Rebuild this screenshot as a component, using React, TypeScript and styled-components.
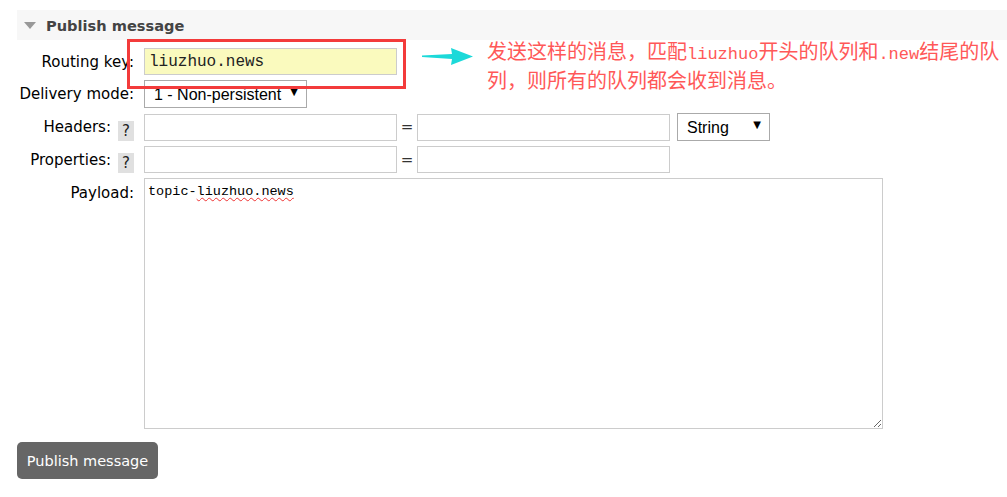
import * as React from 'react';
import styled, { createGlobalStyle } from 'styled-components';

const GlobalStyle = createGlobalStyle`
  html, body {
    margin: 0;
    padding: 0;
    background: #fff;
  }
  body {
    font-family: "DejaVu Sans", Verdana, sans-serif;
    font-size: 15px;
    color: #000;
  }
`;

const Page = styled.div`
  position: relative;
  width: 1007px;
  height: 497px;
  padding: 10px 0 0 17px;
  box-sizing: border-box;
  overflow: hidden;
`;

const SectionHeader = styled.div`
  display: flex;
  align-items: center;
  height: 30px;
  padding-left: 7px;
  background: #f7f7f7;
`;

const Triangle = styled.span`
  width: 0;
  height: 0;
  border-left: 6.5px solid transparent;
  border-right: 6.5px solid transparent;
  border-top: 7px solid #999;
  margin-right: 10px;
`;

const Title = styled.h2`
  margin: 0;
  font-size: 14.6px;
  font-weight: bold;
  color: #444;
`;

const Form = styled.div`
  display: grid;
  grid-template-columns: 117px auto;
  column-gap: 10px;
  row-gap: 5px;
  margin-top: 8px;
`;

const Label = styled.label<{ $top?: boolean }>`
  display: flex;
  align-items: ${ p => p.$top ? 'flex-start' : 'center' };
  justify-content: flex-end;
  white-space: nowrap;
  padding-top: ${ p => p.$top ? '6px' : '0' };
`;

const Help = styled.span`
  display: inline-flex;
  align-items: center;
  justify-content: center;
  align-self: flex-end;
  width: 16px;
  height: 20px;
  margin-left: 7px;
  background: #e0e0e0;
  color: #222;
  font-size: 15px;
`;

const Controls = styled.div`
  display: flex;
  align-items: center;
`;

const TextInput = styled.input<{ $highlight?: boolean }>`
  box-sizing: border-box;
  width: 253px;
  height: 27px;
  margin: 0;
  padding: 0 4px;
  border: 1px solid #ccc;
  background: ${ p => p.$highlight ? '#fafabe' : '#fff' };
  font-family: "Liberation Mono", "Courier New", monospace;
  font-size: 16px;
  color: #222;
  outline: none;
`;

const Equals = styled.span`
  width: 20px;
  text-align: center;
  color: #333;
`;

const SelectWrap = styled.div<{ $width: number }>`
  position: relative;
  width: ${ p => p.$width }px;
  margin-left: ${ p => p.$width < 120 ? '7px' : '0' };
`;

const Select = styled.select`
  appearance: none;
  box-sizing: border-box;
  width: 100%;
  height: 28px;
  margin: 0;
  padding: 0 0 0 9px;
  border: 1px solid #aaa;
  border-radius: 0;
  background: #fff;
  font-family: "Liberation Sans", Arial, sans-serif;
  font-size: 16px;
  color: #000;
`;

const Caret = styled.span`
  position: absolute;
  right: 9px;
  top: 6px;
  font-size: 10px;
  color: #000;
  pointer-events: none;
`;

const Payload = styled.div`
  box-sizing: border-box;
  width: 739px;
  height: 251px;
  padding: 5px 3px;
  border: 1px solid #ccc;
  font-family: "Liberation Mono", "Courier New", monospace;
  font-size: 13.5px;
  color: #000;
  overflow: auto;
  resize: both;
`;

const Misspelled = styled.span`
  text-decoration: underline wavy #e33;
  text-decoration-thickness: 1px;
  text-underline-offset: 2px;
`;

const PublishButton = styled.button`
  margin-top: 13px;
  width: 141px;
  height: 37px;
  border: none;
  border-radius: 5px;
  background: #666;
  color: #fff;
  font-family: "DejaVu Sans", Verdana, sans-serif;
  font-size: 14.5px;
  cursor: pointer;
`;

const Highlight = styled.div`
  position: absolute;
  left: 127px;
  top: 39px;
  width: 279px;
  height: 50px;
  box-sizing: border-box;
  border: 3px solid #f33b3b;
  pointer-events: none;
`;

const Arrow = styled.svg`
  position: absolute;
  left: 422px;
  top: 48px;
`;

const Note = styled.div`
  position: absolute;
  left: 487px;
  top: 38px;
  font-family: "Noto Sans CJK SC", sans-serif;
  font-size: 20px;
  line-height: 25px;
  color: #ff5858;
  white-space: nowrap;
`;

const Latin = styled.span`
  font-family: "Liberation Mono", "Courier New", monospace;
  font-size: 17px;
`;

const App = () => (
  <>
    <GlobalStyle/>
    <Page>
      <SectionHeader>
        <Triangle/>
        <Title>Publish message</Title>
      </SectionHeader>

      <Form>
        <Label>Routing key:</Label>
        <Controls>
          <TextInput $highlight defaultValue="liuzhuo.news"/>
        </Controls>

        <Label>Delivery mode:</Label>
        <Controls>
          <SelectWrap $width={ 163 }>
            <Select defaultValue="1">
              <option value="1">1 - Non-persistent</option>
              <option value="2">2 - Persistent</option>
            </Select>
            <Caret>▼</Caret>
          </SelectWrap>
        </Controls>

        <Label>Headers: <Help>?</Help></Label>
        <Controls>
          <TextInput/>
          <Equals>=</Equals>
          <TextInput/>
          <SelectWrap $width={ 93 }>
            <Select defaultValue="string">
              <option value="string">String</option>
              <option value="number">Number</option>
            </Select>
            <Caret>▼</Caret>
          </SelectWrap>
        </Controls>

        <Label>Properties: <Help>?</Help></Label>
        <Controls>
          <TextInput/>
          <Equals>=</Equals>
          <TextInput/>
        </Controls>

        <Label $top>Payload:</Label>
        <Payload>topic-<Misspelled>liuzhuo.news</Misspelled></Payload>
      </Form>

      <PublishButton>Publish message</PublishButton>

      <Highlight/>
      <Arrow width="52" height="17" viewBox="0 0 52 17">
        <polygon points="0,7.5 30,6 29,0 51,8.5 29,17 30,11 0,9" fill="#1cd9d9"/>
      </Arrow>
      <Note>
        发送这样的消息，匹配<Latin>liuzhuo</Latin>开头的队列和<Latin>.new</Latin>结尾的队<br/>
        列，则所有的队列都会收到消息。
      </Note>
    </Page>
  </>
);

export default App;
